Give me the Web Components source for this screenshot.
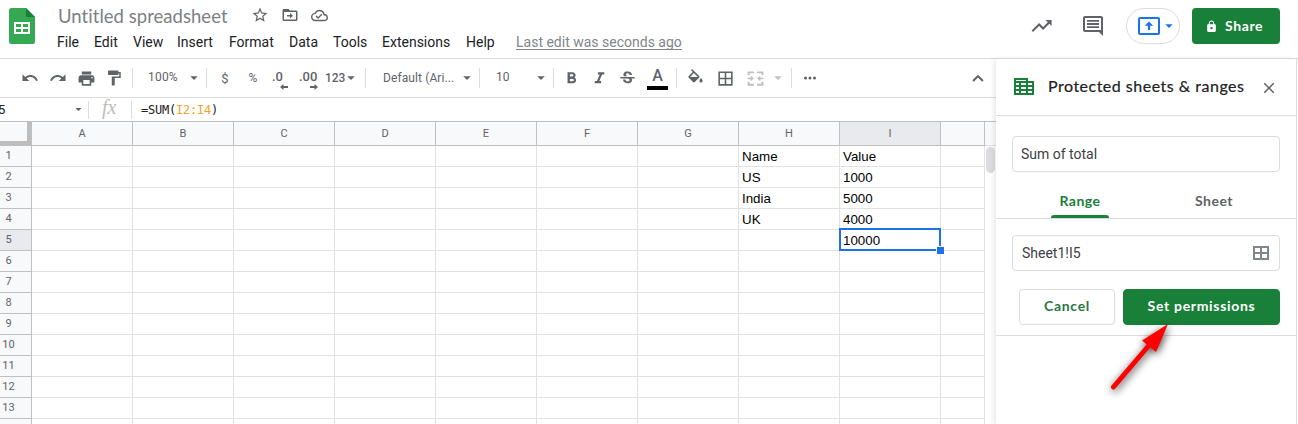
<!DOCTYPE html>
<html lang="en">
<head>
<meta charset="utf-8">
<title>Untitled spreadsheet</title>
<style>
html,body{margin:0;height:424px;overflow:hidden;background:#fff}
body{font-family:Roboto,"Liberation Sans",sans-serif;color:#202124}
</style>
</head>
<body>
<sheet-app></sheet-app>
<script>
const define = (name, css, html) => {
  const t = document.createElement('template');
  t.innerHTML = `<style>*{box-sizing:border-box}${css}</style>${html}`;
  customElements.define(name, class extends HTMLElement {
    constructor(){ super(); this.attachShadow({mode:'open'}).append(t.content.cloneNode(true)); }
  });
};

const icons = {
  undo:'<path d="M12.5 8c-2.65 0-5.05.99-6.9 2.6L2 7v9h9l-3.62-3.62c1.39-1.16 3.16-1.88 5.12-1.88 3.54 0 6.55 2.31 7.6 5.5l2.37-.78C21.08 11.03 17.15 8 12.5 8z"/>',
  redo:'<path d="M18.4 10.6C16.55 8.99 14.15 8 11.5 8c-4.65 0-8.58 3.03-9.96 7.22L3.9 16c1.05-3.19 4.05-5.5 7.6-5.5 1.95 0 3.73.72 5.12 1.88L13 16h9V7l-3.6 3.6z"/>',
  print:'<path d="M19 8H5c-1.66 0-3 1.34-3 3v6h4v4h12v-4h4v-6c0-1.66-1.34-3-3-3zm-3 11H8v-5h8v5zm3-7c-.55 0-1-.45-1-1s.45-1 1-1 1 .45 1 1-.45 1-1 1zm-1-9H6v4h12V3z"/>',
  paint:'<path d="M18 4V3c0-.55-.45-1-1-1H5c-.55 0-1 .45-1 1v4c0 .55.45 1 1 1h12c.55 0 1-.45 1-1V6h1v4H9v11c0 .55.45 1 1 1h2c.55 0 1-.45 1-1v-9h8V4h-3z"/>',
  down:'<path d="M7 9.5l5 5 5-5z"/>',
  bold:'<path d="M15.6 10.79c.97-.67 1.65-1.77 1.65-2.79 0-2.26-1.75-4-4-4H7v14h7.04c2.09 0 3.71-1.7 3.71-3.79 0-1.52-.86-2.82-2.15-3.42zM10 6.5h3c.83 0 1.5.67 1.5 1.5s-.67 1.5-1.5 1.5h-3v-3zm3.5 9H10v-3h3.500c.83 0 1.500.67 1.500 1.500s-.67 1.500-1.500 1.500z"/>',
  italic:'<path d="M10 4v3h2.210l-3.420 8H6v3h8v-3h-2.210l3.420-8H18V4z"/>',
  strike:'<path d="M7.240 8.750c-.26-.48-.39-1.030-.39-1.670 0-.61.13-1.160.4-1.670.26-.5.63-.93 1.110-1.290.48-.35 1.050-.63 1.700-.83.66-.19 1.390-.29 2.180-.29.81 0 1.540.11 2.210.34.66.22 1.230.54 1.690.94.47.4.83.88 1.080 1.430.25.550.38 1.150.38 1.810h-3.010c0-.31-.05-.59-.15-.85-.09-.27-.24-.49-.44-.68-.2-.19-.45-.33-.75-.44-.3-.1-.66-.16-1.060-.16-.39 0-.74.04-1.030.13-.29.09-.53.21-.72.36-.19.16-.34.34-.44.55-.1.21-.15.43-.15.66 0 .48.25.88.74 1.210.38.25.77.48 1.410.7H7.390c-.05-.08-.11-.17-.15-.25zM21 12v-2H3v2h9.620c.18.07.4.14.55.2.37.17.66.34.87.51.21.17.35.36.43.57.07.2.11.43.11.69 0 .23-.05.45-.14.66-.09.2-.23.38-.42.53-.19.15-.42.26-.71.35-.29.08-.63.13-1.010.13-.43 0-.83-.04-1.180-.13s-.66-.23-.91-.42c-.25-.19-.45-.44-.59-.75-.14-.31-.25-.76-.25-1.210H6.400c0 .55.08 1.130.24 1.580.16.45.37.85.65 1.210.28.35.6.66.98.92.37.26.78.48 1.220.65.44.17.9.3 1.380.39.48.08.96.13 1.440.13.8 0 1.530-.09 2.180-.28s1.210-.45 1.670-.79c.46-.34.82-.77 1.070-1.270s.38-1.070.38-1.710c0-.6-.1-1.140-.31-1.610-.05-.11-.11-.23-.17-.33H21z"/>',
  fill:'<path d="M16.560 8.940L7.620 0 6.210 1.410l2.380 2.380-5.150 5.150c-.59.59-.59 1.540 0 2.120l5.500 5.500c.29.29.68.44 1.060.44s.77-.15 1.060-.44l5.500-5.500c.59-.58.59-1.530 0-2.120zM5.210 10L10 5.210 14.790 10H5.210zM19 11.500s-2 2.170-2 3.500c0 1.100.9 2 2 2s2-.9 2-2c0-1.330-2-3.500-2-3.500z"/>',
  borders:'<path d="M3 3v18h18V3H3zm8 16H5v-6h6v6zm0-8H5V5h6v6zm8 8h-6v-6h6v6zm0-8h-6V5h6v6z"/>',
  merge:'<path d="M2 3h8v2.400H4.400V8H2zM14 3h8v5h-2.400V5.400H14zM2 16h2.400v2.600H10V21H2zM19.600 16H22v5h-8v-2.400h5.600zM2 11h4V8.500l4 3.500-4 3.500V13H2zM22 11h-4V8.500L14 12l4 3.500V13h4z"/>',
  more:'<path d="M6 10a2 2 0 100 4 2 2 0 000-4zm12 0a2 2 0 100 4 2 2 0 000-4zm-6 0a2 2 0 100 4 2 2 0 000-4z"/>',
  up:'<path d="M12 7.500l-7.500 7.500 1.900 1.900 5.600-5.600 5.600 5.600 1.900-1.900z"/>',
  star:'<path d="M22 9.240l-7.190-.62L12 2 9.190 8.630 2 9.240l5.460 4.730L5.820 21 12 17.270 18.180 21l-1.630-7.030L22 9.240zM12 15.400l-3.760 2.270 1-4.280-3.320-2.880 4.380-.38L12 6.100l1.710 4.040 4.380.38-3.320 2.880 1 4.280L12 15.400z"/>',
  folder:'<path d="M20 6h-8l-2-2H4c-1.100 0-2 .9-2 2v12c0 1.100.9 2 2 2h16c1.100 0 2-.9 2-2V8c0-1.100-.9-2-2-2zm0 12H4V8h16v10zM12 9.200v2.800H8v2h4v2.800l4-3.800z"/>',
  cloud:'<path d="M19.350 10.040C18.670 6.590 15.640 4 12 4 9.110 4 6.600 5.640 5.350 8.040 2.340 8.360 0 10.910 0 14c0 3.310 2.690 6 6 6h13c2.760 0 5-2.240 5-5 0-2.640-2.050-4.780-4.650-4.960zM19 18H6c-2.210 0-4-1.790-4-4 0-2.050 1.530-3.760 3.560-3.970l1.070-.11.5-.95C8.080 7.140 9.940 6 12 6c2.620 0 4.880 1.860 5.390 4.430l.3 1.500 1.530.11c1.560.1 2.780 1.410 2.780 2.960 0 1.650-1.350 3-3 3zm-9-3.820l-2.090-2.090L6.500 13.500 10 17l6.010-6.010-1.410-1.410z"/>',
  trend:'<path d="M15.500 6l2.300 2.300-4.700 4.700-4-4L1.600 16.600 3 18l6.100-6.100 4 4 6.200-6.200L21.600 12V6z"/>',
  comment:'<path d="M2 4v12c0 1.100.9 2 2 2h14l4 4V4c0-1.100-.9-2-2-2H4c-1.100 0-2 .9-2 2zm18 0v12H4V4h16zM6 12.200h12V14H6zM6 9.100h12v1.800H6zM6 6h12v1.800H6z"/>',
  lock:'<path d="M18 8h-1V6c0-2.760-2.240-5-5-5S7 3.240 7 6v2H6c-1.100 0-2 .9-2 2v10c0 1.100.9 2 2 2h12c1.100 0 2-.9 2-2V10c0-1.100-.9-2-2-2zm-6 9.200c-1.200 0-2.200-1-2.200-2.200s1-2.200 2.200-2.200 2.200 1 2.200 2.200-1 2.200-2.200 2.200zM15.100 8H8.900V6c0-1.710 1.390-3.100 3.100-3.100s3.100 1.390 3.100 3.100z"/>',
  close:'<path d="M19 6.410L17.590 5 12 10.590 6.410 5 5 6.410 10.590 12 5 17.590 6.410 19 12 13.410 17.590 19 19 17.590 13.410 12z"/>'
};
customElements.define('ui-icon', class extends HTMLElement {
  connectedCallback(){
    if (this.shadowRoot) return;
    const s = this.getAttribute('size') || 18;
    this.attachShadow({mode:'open'}).innerHTML =
      `<style>:host{display:inline-flex;flex:none;width:${s}px;height:${s}px}svg{display:block;fill:currentColor}</style>
       <svg width="${s}" height="${s}" viewBox="0 0 24 24">${icons[this.getAttribute('name')]}</svg>`;
  }
});

define('menu-bar', `
:host{display:grid;grid-template-columns:37px 39px 44px 52px 60px 44px 49px 84px 50px auto;height:20px;align-items:center;font-size:14px;line-height:20px;color:#202124;white-space:nowrap}
u{color:#80868b;letter-spacing:0;text-decoration:none;border-bottom:1px solid #80868b;line-height:14px;height:15px;justify-self:start}`,
`<span>File</span><span>Edit</span><span>View</span><span>Insert</span><span>Format</span><span>Data</span><span>Tools</span><span>Extensions</span><span>Help</span><u>Last edit was seconds ago</u>`);

define('title-bar', `
:host{display:flex;height:59px;border-bottom:1px solid #dadce0;color:#5f6368}
.logo{width:26px;height:36px;margin:8px 0 0 9px}
.main{margin-left:22px;padding-top:5px;width:640px}
.row{display:flex;align-items:center;height:22px;margin-bottom:5px}
.name{font:18.500px/22px Lato,sans-serif;width:194px;padding-left:1px;color:#7b7f84;white-space:nowrap;letter-spacing:.03px}
.row ui-icon{position:relative;top:-1px}
.row ui-icon+ui-icon{margin-left:12px}
.right{display:flex;align-items:center;height:36px;margin:8px 0 0 auto;padding-right:18px}
.present{display:flex;align-items:center;width:54px;height:36px;border:1px solid #dadce0;border-radius:18px;margin:0 12px 0 21px;padding-left:11px;color:#1a73e8}
.share{display:flex;align-items:center;width:88px;height:36px;border-radius:4px;background:#188038;color:#fff;padding-left:13px;font:700 14px/34px Lato,sans-serif;letter-spacing:.6px}
.share span{margin-top:-1px}
.share ui-icon{margin-right:7px}`,
`<svg class="logo" viewBox="0 0 26 36"><path d="M2.500 0H17l9 9v24.500a2.500 2.500 0 0 1-2.500 2.500h-21A2.500 2.500 0 0 1 0 33.500v-31A2.500 2.500 0 0 1 2.500 0z" fill="#34a853"/><path d="M17 0l9 9h-9z" fill="#188038"/><path d="M5 14h16v12H5zm2 2v3h5v-3zm7 0v3h5v-3zm-7 5v3h5v-3zm7 0v3h5v-3z" fill="#fff" fill-rule="evenodd"/></svg>
<div class="main"><div class="row"><span class="name">Untitled spreadsheet</span><ui-icon name="star"></ui-icon><ui-icon name="folder"></ui-icon><ui-icon name="cloud" size="17"></ui-icon></div><menu-bar></menu-bar></div>
<div class="right"><ui-icon name="trend" size="24"></ui-icon><ui-icon name="comment" size="24" style="margin-left:27px"></ui-icon>
<div class="present"><svg width="22" height="18" viewBox="0 0 22 18"><rect x="1" y="1" width="20" height="16" rx="1" fill="none" stroke="#1a73e8" stroke-width="2"/><path d="M11 4.500L6.800 8.700h3.100V13h2.200V8.700h3.100z" fill="#1a73e8"/></svg><ui-icon name="down" size="18" style="margin-left:0"></ui-icon></div>
<div class="share"><ui-icon name="lock" size="13"></ui-icon><span>Share</span></div></div>`);

define('tool-bar', `
:host{display:flex;height:39px;align-items:center;border-bottom:1px solid #dadce0;width:996px;color:#5f6368;font-size:12px;font-weight:500;white-space:nowrap}
.i{display:flex;flex:none;width:28px;justify-content:center;align-items:center}
i{flex:none;width:1px;height:20px;background:#dadce0}
.t{flex:none;line-height:14px}
.d{display:grid;height:22px;position:relative;top:3px;line-height:14px;flex:none;font-size:13px}
.d svg{margin-top:-3px;justify-self:end}
.a{display:grid;justify-items:center;width:21px;margin-left:6px;height:24px;font-size:16px;line-height:20px;flex:none}
.a b{font-weight:500;height:20px}.a s{width:21px;height:4px;background:#000}`,
`<span class="i" style="margin-left:16px"><ui-icon name="undo"></ui-icon></span><span class="i"><ui-icon name="redo"></ui-icon></span><span class="i"><ui-icon name="print" size="19"></ui-icon></span><span class="i"><ui-icon name="paint"></ui-icon></span>
<i style="margin-left:4px"></i><span class="t" style="width:37px;margin:-2px 0 0 15px;letter-spacing:.2px;font-weight:400">100%</span><ui-icon name="down"></ui-icon><i style="margin-left:3px"></i>
<span class="i" style="margin-left:4px;font-size:13px;font-weight:400">$</span><span class="i" style="font-weight:400">%</span>
<span class="d" style="width:16px;margin-left:5px">.0<svg width="8" height="6"><path d="M8 2H3.500V0L0 3l3.500 3V4H8z" fill="#5f6368"/></svg></span>
<span class="d" style="width:19px;margin-left:11px">.00<svg width="8" height="6"><path d="M0 2h4.500V0L8 3 4.500 6V4H0z" fill="#5f6368"/></svg></span>
<span class="t" style="margin-left:7px;width:17px;font-size:12px;letter-spacing:-.1px">123</span><ui-icon name="down"></ui-icon><i style="margin-left:5px"></i>
<span class="t" style="margin-left:17px;width:75px;font-weight:400;letter-spacing:.1px">Default (Ari...</span><ui-icon name="down"></ui-icon><i style="margin-left:3px"></i>
<span class="t" style="margin:-2px 0 0 16px;width:36px;font-weight:400">10</span><ui-icon name="down"></ui-icon><i style="margin-left:3px"></i>
<span class="i" style="margin-left:3px"><ui-icon name="bold" size="19"></ui-icon></span><span class="i"><ui-icon name="italic" size="19"></ui-icon></span><span class="i"><ui-icon name="strike" size="19"></ui-icon></span>
<span class="a"><b>A</b><s></s></span><i style="margin-left:8px"></i>
<span class="i" style="margin-left:4px"><ui-icon name="fill" size="19"></ui-icon></span><span class="i" style="margin-left:2px"><ui-icon name="borders" size="19"></ui-icon></span><span class="i" style="margin-left:2px;color:#bdbfc2"><ui-icon name="merge" size="19"></ui-icon></span><ui-icon name="down" style="color:#bdbfc2"></ui-icon><i style="margin-left:4px"></i>
<span class="i" style="margin-left:4px"><ui-icon name="more"></ui-icon></span><span class="i" style="margin-left:140px"><ui-icon name="up"></ui-icon></span>`);

define('formula-bar', `
:host{display:flex;height:24px;width:996px;border-bottom:1px solid #c0c0c0;align-items:center;color:#202124}
.n{width:70px;font-size:13px;margin-left:-2px}
i{width:1px;height:18px;background:#dadce0}
.fx{font:italic 20px/20px "Liberation Serif",serif;color:#bdbdbd;margin-left:13px;width:29px;margin-top:-5px}
.f{font:12px/20px "DejaVu Sans Mono",monospace;letter-spacing:-.220px;margin-left:9px;margin-top:1px}
.f b{font-weight:400;color:#f4a12e}`,
`<span class="n">5</span><ui-icon name="down" size="15" style="color:#5f6368;margin-left:3px"></ui-icon><i style="margin-left:2px"></i><span class="fx">fx</span><i></i><span class="f">=SUM(<b>I2:I4</b>)</span>`);

customElements.define('sheet-grid', class extends HTMLElement {
  connectedCallback(){
    if (this.shadowRoot) return;
    const data = {1:['Name','Value'],2:['US','1000'],3:['India','5000'],4:['UK','4000'],5:['','10000']};
    const cols = [...'ABCDEFGHI',''];
    let h = '<div class="corner"></div>' + cols.map(c => `<div class="h${c==='I'?' sel':''}">${c}</div>`).join('');
    for (let r=1;r<=14;r++){
      h += `<div class="r${r===5?' sel':''}"><span>${r<14?r:''}</span></div>`;
      cols.forEach((c,i) => {
        const v = data[r] && i>6 && i<9 ? data[r][i-7] : '';
        h += `<div class="c">${v}${r===5&&c==='I'?'<div class="cur"><b></b></div>':''}</div>`;
      });
    }
    this.attachShadow({mode:'open'}).innerHTML = `<style>
*{box-sizing:border-box}
:host{display:flex;height:302px;width:996px;overflow:hidden}
.g{display:grid;flex:none;grid-template-columns:32px repeat(9,101px) 44px;grid-template-rows:24px repeat(14,21px)}
.corner{background:#f8f9fa;border-right:1px solid #c0c0c0;border-bottom:1px solid #c0c0c0;box-shadow:inset -4px -4px #bdbdbd}
.h,.r{background:#f8f9fa;color:#5f6368;font-size:11px;border-right:1px solid #c0c0c0;border-bottom:1px solid #c0c0c0}
.h{text-align:center;line-height:23px}
.r span{display:block;width:17px;text-align:center;line-height:19px}
.sel{background:#e8eaed}
.c{position:relative;border-right:1px solid #e1e1e1;border-bottom:1px solid #e1e1e1;padding:1px 0 0 3px;font:13.330px/20px "Liberation Sans",Arial,sans-serif;color:#000}
.cur{position:absolute;z-index:1;inset:-2px -1px -1px -1px;border:2px solid #1a73e8}
.cur b{position:absolute;right:-5px;bottom:-5px;width:8px;height:8px;background:#1a73e8;border:solid #fff;border-width:1px 0 0 1px}
.s{width:11px}.s div:first-child{height:24px;background:#f8f9fa;border-bottom:1px solid #dadce0}
.s div+div{width:9px;height:26px;margin:1px 0 0 1px;border-radius:5px;background:#dadce0}
</style><div class="g">${h}</div><div class="s"><div></div><div></div></div>`;
  }
});

define('text-field', `
:host{display:flex;align-items:center;justify-content:space-between;width:268px;height:36px;box-sizing:border-box;border:1px solid #dadce0;border-radius:4px;padding:0 10px 0 8px;font-size:14px;color:#3c4043}`,
`<slot></slot>`);

define('push-button', `
:host{display:flex;box-sizing:border-box;align-items:center;justify-content:center;height:36px;border:1px solid #dadce0;border-radius:4px;font:700 14px/34px Lato,sans-serif;color:#2c7547;letter-spacing:.68px;padding-bottom:2px;white-space:nowrap}
:host([primary]){background:#188038;border-color:#188038;color:#fff}`, `<slot></slot>`);

define('side-panel', `
:host{display:block;width:301px;height:365px;border-right:1px solid #dadce0;background:#fff;box-shadow:-2px 0 4px rgba(60,64,67,.12);position:relative}
header{display:flex;align-items:center;height:57px;border-bottom:1px solid #dadce0;padding:0 18px 0 18px}
h2{margin:-2px 0 0 14px;font:400 16px/24px Lato,sans-serif;color:#202124;letter-spacing:.5px;white-space:nowrap;flex:1;-webkit-text-stroke:.2px}
text-field{margin-left:16px}
.tabs{display:grid;grid-template-columns:134px 134px;padding-left:17px;height:33px;margin-top:14px;border-bottom:1px solid #dadce0;font:700 14px/30px Lato,sans-serif;letter-spacing:.5px;text-align:center;color:#5f6368}
.tabs span{display:grid;justify-items:center;grid-template-rows:29px 3px}
.tabs .on{color:#188038}.on::after{content:"";width:58px;height:3px;background:#188038;border-radius:3px 3px 0 0}
.b{display:flex;gap:8px;padding:18px 0 0 23px;height:65px;border-bottom:1px solid #dadce0}
.arrow{position:absolute;left:95px;top:252px;overflow:visible;filter:drop-shadow(1px 2px 4px rgba(0,0,0,.75))}`,
`<header><svg width="20" height="17" viewBox="0 0 20 17" style="margin-top:-1px"><path fill="#188038" fill-rule="evenodd" d="M0 0h14v3h6v14H0zM2 5v2h3V5zm5 0v2h5V5zm7 0v2h4V5zM2 9v2h3V9zm5 0v2h5V9zm7 0v2h4V9zM2 13v2h3v-2zm5 0v2h5v-2zm7 0v2h4v-2zM2 2v1h10V2z"/></svg><h2>Protected sheets &amp; ranges</h2><ui-icon name="close" size="18" style="color:#5f6368;margin-top:2px"></ui-icon></header>
<text-field style="margin-top:20px">Sum of total</text-field>
<div class="tabs"><span class="on">Range</span><span>Sheet</span></div>
<text-field style="margin-top:16px"><span style="margin-left:1px">Sheet1!I5</span><svg width="16" height="14" viewBox="0 0 16 14"><path d="M1 1h14v12H1zM8 1v12M1 7h14" fill="none" stroke="#80868b" stroke-width="2"/></svg></text-field>
<div class="b"><push-button style="width:96px">Cancel</push-button><push-button primary style="width:157px">Set permissions</push-button></div>
<svg class="arrow" width="90" height="90" viewBox="1090 311 90 90"><path d="M1112.500 387L1150 343" stroke="#f00" stroke-width="5" stroke-linecap="round"/><path d="M1167 324L1141 340.500 1155 352z" fill="#f00"/></svg>`);

define('sheet-app', `
:host{display:block;width:1298px;height:424px;overflow:hidden;background:#fff}
.w{display:flex}`,
`<title-bar></title-bar><div class="w"><div><tool-bar></tool-bar><formula-bar></formula-bar><sheet-grid></sheet-grid></div><side-panel></side-panel></div>`);
</script>
</body>
</html>
